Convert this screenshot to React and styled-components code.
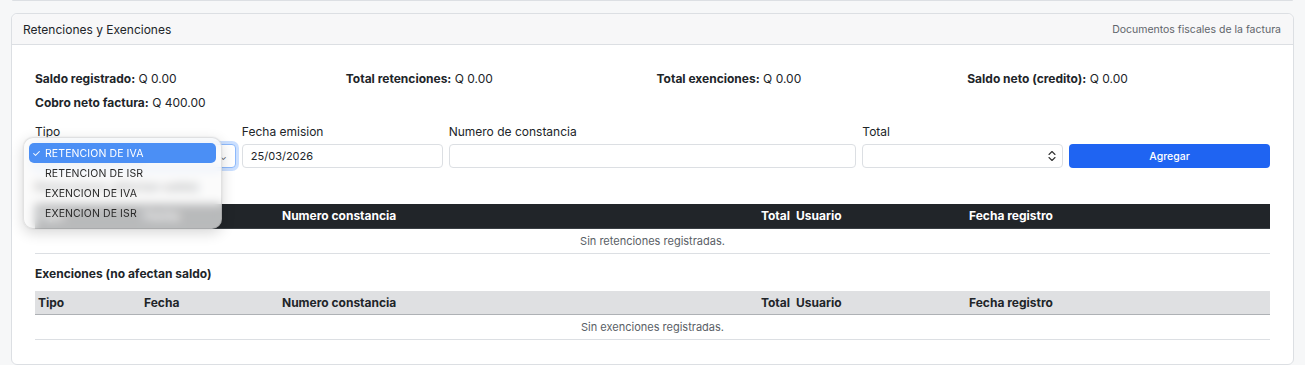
import React from "react";
import styled, { createGlobalStyle } from "styled-components";

const Global = createGlobalStyle`
  html, body { margin: 0; padding: 0; background: #f6f7f8; }
  body { font-family: Inter, "Noto Sans", "Liberation Sans", sans-serif; color: #212529; -webkit-font-smoothing: antialiased; }
  * { box-sizing: border-box; }
`;

const Page = styled.div`
  width: 1305px;
  height: 365px;
  padding: 0 11px;
  overflow: hidden;
  background: #f6f7f8;
`;

const PrevCardEdge = styled.div`
  height: 1px;
  margin: 0 1px 12px;
  border-bottom: 1px solid #dcdfe3;
  border-radius: 0 0 6px 6px;
`;

const Card = styled.section`
  background: #fff;
  border: 1px solid #dcdfe3;
  border-radius: 6px;
  height: 352px;
`;

const CardHeader = styled.header`
  height: 31px;
  display: flex;
  align-items: center;
  justify-content: space-between;
  padding: 0 12px 0 11px;
  background: #f7f7f8;
  border-bottom: 1px solid #dcdfe3;
  border-radius: 6px 6px 0 0;
`;

const HeaderTitle = styled.span`
  font-size: 12px;
  color: #212529;
`;

const HeaderNote = styled.span`
  font-size: 10.5px;
  color: #5f656b;
`;

const CardBody = styled.div`
  padding: 22px 23px 0;
`;

const Stats = styled.div`
  display: grid;
  grid-template-columns: repeat(4, 1fr);
  column-gap: 8px;
`;

const Stat = styled.div`
  font-size: 12px;
  line-height: 24px;
  height: 24px;
  white-space: nowrap;
  b { font-weight: 700; }
`;

const FormGrid = styled.div`
  margin-top: 10px;
  display: grid;
  grid-template-columns: repeat(12, 1fr);
  column-gap: 6px;
  align-items: end;
`;

const Field = styled.div`
  grid-column: span ${(p) => p.$span};
  display: flex;
  flex-direction: column;
`;

const Label = styled.label`
  font-size: 12px;
  line-height: 14px;
  margin-bottom: 5px;
  color: #212529;
`;

const Control = styled.div`
  position: relative;
`;

const Input = styled.div`
  height: 24px;
  border: 1px solid ${(p) => (p.$focus ? "#8db9fb" : "#dcdfe3")};
  border-radius: 4px;
  background: #fff;
  font-size: 11px;
  padding: 0 8px;
  display: flex;
  align-items: center;
  justify-content: space-between;
  color: #212529;
  box-shadow: ${(p) => (p.$focus ? "0 0 0 3px rgba(13,110,253,0.22)" : "none")};
`;

const Spinner = styled.svg`
  width: 8px;
  height: 12px;
  margin-right: -2px;
`;

const AddButton = styled.button`
  height: 24px;
  border: none;
  border-radius: 4px;
  background: #1f64f2;
  color: #fff;
  font-family: inherit;
  font-size: 10.5px;
  font-weight: 500;
  cursor: pointer;
`;

const SectionTitle = styled.h6`
  margin: ${(p) => p.$mt}px 0 0;
  font-size: 12px;
  font-weight: 700;
  line-height: 14px;
  height: 14px;
  color: #212529;
`;

const Table = styled.table`
  width: 100%;
  border-collapse: collapse;
  margin-top: ${(p) => p.$mt}px;
  table-layout: fixed;
  font-size: 12px;
`;

const Th = styled.th`
  height: 24px;
  padding: 0 3px;
  font-weight: 700;
  text-align: ${(p) => p.$align || "left"};
  background: ${(p) => (p.$dark ? "#212529" : "#dfe0e2")};
  color: ${(p) => (p.$dark ? "#fff" : "#212529")};
  border-bottom: 1px solid ${(p) => (p.$dark ? "#3a3f44" : "#aeb1b5")};
  white-space: nowrap;
`;

const EmptyCell = styled.td`
  height: 25px;
  text-align: center;
  font-size: 11px;
  color: #5a6066;
  border-bottom: 1px solid #dcdfe3;
`;

const Menu = styled.div`
  position: absolute;
  left: -12px;
  top: -7px;
  width: 199px;
  padding: 5px;
  border-radius: 10px;
  background: rgba(250, 250, 250, 0.7);
  backdrop-filter: blur(5px);
  -webkit-backdrop-filter: blur(5px);
  border: 1px solid rgba(0, 0, 0, 0.1);
  box-shadow: 0 4px 14px rgba(0, 0, 0, 0.16), 0 0 2px rgba(0, 0, 0, 0.1);
  z-index: 5;
`;

const MenuItem = styled.div`
  height: 20px;
  display: flex;
  align-items: center;
  border-radius: 5px;
  padding-left: 3px;
  font-size: 10.5px;
  letter-spacing: 0.1px;
  color: ${(p) => (p.$active ? "#fff" : "#2a2a2a")};
  background: ${(p) => (p.$active ? "#4b8ff5" : "transparent")};
`;

const Check = styled.span`
  width: 13px;
  display: inline-block;
  font-size: 10px;
`;

const Caret = styled.span`
  font-size: 9px;
  color: #555;
`;

const cols = [106, 138, 460, 54, 173, null];
const headers = [
  ["Tipo"],
  ["Fecha"],
  ["Numero constancia"],
  ["Total", "right"],
  ["Usuario"],
  ["Fecha registro"],
];

function DataTable({ dark, empty, mt }) {
  return (
    <Table $mt={mt}>
      <colgroup>
        {cols.map((w, i) => (
          <col key={i} style={w ? { width: w } : undefined} />
        ))}
      </colgroup>
      <thead>
        <tr>
          {headers.map(([h, a]) => (
            <Th key={h} $dark={dark} $align={a}>
              {h}
            </Th>
          ))}
        </tr>
      </thead>
      <tbody>
        <tr>
          <EmptyCell colSpan={6}>{empty}</EmptyCell>
        </tr>
      </tbody>
    </Table>
  );
}

export default function App() {
  const options = ["RETENCION DE IVA", "RETENCION DE ISR", "EXENCION DE IVA", "EXENCION DE ISR"];
  return (
    <Page>
      <Global />
      <PrevCardEdge />
      <Card>
        <CardHeader>
          <HeaderTitle>Retenciones y Exenciones</HeaderTitle>
          <HeaderNote>Documentos fiscales de la factura</HeaderNote>
        </CardHeader>
        <CardBody>
          <Stats>
            <Stat><b>Saldo registrado:</b> Q 0.00</Stat>
            <Stat><b>Total retenciones:</b> Q 0.00</Stat>
            <Stat><b>Total exenciones:</b> Q 0.00</Stat>
            <Stat><b>Saldo neto (credito):</b> Q 0.00</Stat>
            <Stat><b>Cobro neto factura:</b> Q 400.00</Stat>
          </Stats>
          <FormGrid>
            <Field $span={2}>
              <Label>Tipo</Label>
              <Control>
                <Input $focus>
                  <span>RETENCION DE IVA</span>
                  <Caret>⌄</Caret>
                </Input>
                <Menu>
                  {options.map((o, i) => (
                    <MenuItem key={o} $active={i === 0}>
                      <Check>{i === 0 ? "✓" : ""}</Check>
                      {o}
                    </MenuItem>
                  ))}
                </Menu>
              </Control>
            </Field>
            <Field $span={2}>
              <Label>Fecha emision</Label>
              <Input>25/03/2026</Input>
            </Field>
            <Field $span={4}>
              <Label>Numero de constancia</Label>
              <Input />
            </Field>
            <Field $span={2}>
              <Label>Total</Label>
              <Input>
                <span />
                <Spinner viewBox="0 0 8 12">
                  <path d="M1 4.5 L4 1.5 L7 4.5 M1 7.5 L4 10.5 L7 7.5" fill="none" stroke="#333" strokeWidth="1.1" strokeLinecap="round" strokeLinejoin="round" />
                </Spinner>
              </Input>
            </Field>
            <Field $span={2}>
              <AddButton>Agregar</AddButton>
            </Field>
          </FormGrid>
          <SectionTitle $mt={12}>Retenciones (afectan saldo)</SectionTitle>
          <DataTable dark mt={10} empty="Sin retenciones registradas." />
          <SectionTitle $mt={13}>Exenciones (no afectan saldo)</SectionTitle>
          <DataTable mt={10} empty="Sin exenciones registradas." />
        </CardBody>
      </Card>
    </Page>
  );
}
